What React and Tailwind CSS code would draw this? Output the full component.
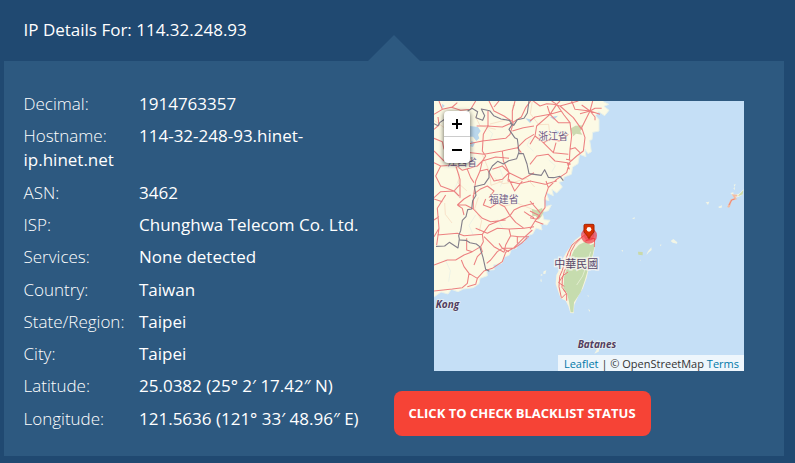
import React from "react";

const details = [
  ["Decimal:", ["1914763357"]],
  ["Hostname:", ["114-32-248-93.hinet-", "ip.hinet.net"]],
  ["ASN:", ["3462"]],
  ["ISP:", ["Chunghwa Telecom Co. Ltd."]],
  ["Services:", ["None detected"]],
  ["Country:", ["Taiwan"]],
  ["State/Region:", ["Taipei"]],
  ["City:", ["Taipei"]],
  ["Latitude:", ["25.0382 (25° 2′ 17.42″ N)"]],
  ["Longitude:", ["121.5636 (121° 33′ 48.96″ E)"]],
];

const mainland =
  "M0 0H528L520 20L536 28L522 34L537 46L524 62L506 50L497 62L507 74V108L488 112L486 134L479 136L484 170L474 176L464 162L468 185L449 178L444 206L428 216L424 238L402 246L400 258L387 262L397 276L380 294L366 283L370 302L348 292L357 317L342 313L346 335L364 330L355 347L336 352L342 374L360 376L351 390L332 386L336 405L318 399L308 417L286 424L283 440L263 444L260 460L244 463L238 480L223 486L216 504L190 510L193 524L170 526L172 542L150 550L147 566L130 578L100 582L84 590L64 583L54 597L33 591L12 606L0 600Z";

const northwestRoads =
  "M162 30V75L148 100L145 150L155 165L145 180L138 210L125 240L118 290M105 128L145 120L215 112L228 100L238 65M128 75L160 75L205 78L235 65L262 48L275 20L290 0M85 152L150 160L205 150L250 140L262 155M70 5L55 18L25 25L0 40M15 0L25 25M50 18L80 28L110 25L125 0M165 0L180 30L210 45L235 62L235 30L243 0M180 18L195 0M205 150L208 180L225 215L265 235L300 215M0 185L20 195L65 192L85 208L130 195L145 180L185 168L225 172M65 192L78 235V290M0 150L30 180M20 195L5 225L20 255L60 270L78 250M0 85L15 72L12 48M0 112L25 122L30 145M118 280L138 265L160 255L180 270L165 290M138 210L160 205L180 240L205 235L225 215L205 195L175 205M225 215L222 240L255 248L290 240M100 205L110 230L120 245M0 290L20 272L60 270L75 285M235 90L268 80L300 75M250 140L275 115L300 100M225 235L242 270L265 240";

const southwestRoads =
  "M35 0L10 40L15 100L8 150M0 12L25 20M10 120L70 115L90 122L145 118L165 90L215 70L228 62L212 35L190 24L170 38L148 30L155 12M0 75L15 65M70 30L90 12L110 0M70 30L85 40L90 60M118 0V42L145 70L170 80L215 75M118 42L95 30L70 30M228 62L240 45L260 35L300 25M125 100L160 115L190 100L225 102L270 100L300 95M145 118L148 140L140 155L145 170L130 185L120 210M150 125L180 155L210 172M205 160L190 170L170 195L158 205M210 172L215 150L230 122L255 125L285 125M205 160L240 160L262 145L280 128M0 210L40 195L65 195L90 180L115 170L140 155M82 195L90 215L105 235L130 250L150 228L175 220L205 200L215 172L240 158L270 128L295 105M105 235L100 265L85 278L55 282L0 288M130 250L125 268L100 275M98 130V165L115 170M225 102L230 122L220 140M195 145L205 160L225 170M270 50L285 60L300 68M228 62L245 82L270 100M250 125L250 145M15 100L0 125";

const northeastRoads =
  "M80 10L60 40L20 75L15 105L40 125L70 155L115 160M80 10L102 42L120 65L125 105L120 145L118 180M10 0L30 15L50 8L70 10L90 15L145 0M65 0L80 10L90 0M125 0L135 25L180 30L195 22L215 22M180 30L210 40M155 12L180 30L188 0M150 38L180 30L195 48V58M180 30L165 60L155 80L165 110L160 150L140 165L118 185M90 15L130 50L155 85M0 190L20 165L55 160L75 180L112 185L118 205M0 60L15 48L60 40L85 65L120 65M60 40L52 15M60 40L95 30M15 105L0 130M40 125L60 115L88 120L115 100M70 155L78 125M118 185L110 215L80 235L55 260L45 290V320L30 340L15 360L0 385M0 240L45 250L80 240M0 300L30 335M0 330L30 345L20 355L0 350M15 360L40 370M120 145L135 140L150 155M55 260L48 240M108 175L128 178M112 185L122 190";

const coralRoads = [
  "M12 76L50 103M180 87L224 76M135 62L150 92L197 103M307 18L301 56L326 89L356 88L359 115L325 126M194 250L219 266L258 260L290 250L314 276",
  "M158 181L179 231L183 271L219 258M74 211L88 239L84 264L110 287M44 324L46 358L66 384M145 307L134 341L155 377L148 409M222 333L263 325L305 342",
];

const borders = [
  "M12 86L24 92L30 82L45 72M106 53L126 40L143 50L138 68L158 76L164 62L154 42L179 47L191 62L213 72L238 76L247 88L237 103L254 128L262 132L267 171L260 191L236 197L220 207L203 199L187 213L177 231V248L163 268L133 275L138 301L128 317L125 342L113 344L108 365L97 376L92 407L86 422L88 432L84 459L58 442L44 453L18 454",
  "M240 85L251 91L262 74L282 70L292 54L297 18M267 176L280 176L291 207L297 236L318 239L334 241L344 224L355 247L371 248L390 244L400 257",
  "M88 435L108 436L120 443L139 447L149 455L159 487L167 523L178 529",
];

function Label({ x, y, size = 29.5, children, latin = false }) {
  return (
    <text
      x={x}
      y={y}
      fontSize={size}
      fill={latin ? "#513d61" : "#705c86"}
      stroke="#faf8ed"
      strokeWidth="4"
      strokeOpacity=".65"
      paintOrder="stroke"
      className={latin ? "font-['Open_Sans',sans-serif] font-bold italic" : "font-['Noto_Sans_CJK_SC',sans-serif]"}
    >
      {children}
    </text>
  );
}

function MapArtwork() {
  return (
    <svg className="block h-[270px] w-[310px]" viewBox="12 18 930 810" aria-label="Map of Taiwan">
      <rect x="12" y="18" width="930" height="810" fill="#c5dff6" />
      <path d={mainland} fill="#fcfae5" stroke="#eaf2e8" strokeWidth="3" />
      <g fill="#bad7ec">
        <path d="M119 93L144 96L152 108L144 119L148 130L139 138L129 125H118Z" />
        <path d="M124 137L135 143L129 156L121 154ZM286 70L308 74L300 84ZM374 104L389 111L380 120ZM36 26L44 32L37 40ZM360 66L384 62L372 74Z" />
      </g>
      <g fill="#cddab0">
        <path d="M421 101L436 92L458 91L451 110L457 119L438 116L430 124Z" />
        <path d="M305 341L320 346L336 339L341 352L334 365L326 374L317 363L307 363ZM248 31L256 28L248 41Z" />
      </g>
      <g fill="none" stroke="#d5e5e8" strokeWidth="1.5" opacity=".75">
        <path d="M58 108L70 150L54 188M88 250L74 282L91 312M168 97L188 116L178 139M209 219L221 251L211 275M304 124L291 151L311 169M356 195L376 212L366 230M137 360L117 391L130 421M203 373L219 401M45 492L61 527L56 560" />
      </g>
      <g fill="none" stroke="#f6cdb2" strokeWidth="2.2" opacity=".75">
        {coralRoads.map((d) => <path d={d} key={d} />)}
      </g>
      <g fill="none" stroke="#ec8181" strokeWidth="3.2" strokeLinejoin="round">
        <path d={northwestRoads} transform="translate(12 18)" />
        <path d={southwestRoads} transform="translate(12 300)" />
        <path d={northeastRoads} transform="translate(300 18)" />
      </g>
      <g fill="none" stroke="#817d89" strokeWidth="3.3" strokeLinejoin="round">
        {borders.map((d) => <path d={d} key={d} />)}
      </g>

      <path d="M471 409L454 421L435 435L423 452L410 470L397 493L389 522L379 540L377 567L384 588L392 610L407 617L415 633L421 654L431 655L433 629L445 603L459 580L470 549L476 522L487 494L494 460L496 430L487 417Z" fill="#f8f4de" />
      <path d="M466 440L447 449L432 466L421 491L410 522L402 546L402 560L400 580L411 594L417 620L422 652H430L432 622L452 592L465 554L474 523L488 480L496 444L482 450Z" fill="#c6dcae" />
      <g fill="none" stroke="#ec7777" strokeWidth="3">
        <path d="M463 421L444 435L426 450L415 472L405 499L397 526L389 544L387 575L394 608M454 429L435 448L423 470L415 503L403 529L397 552L396 577L407 592M409 505L397 509M414 531L399 542L386 563L403 574M400 583L410 597V617M394 610L409 595M466 438L481 432L494 430L493 456" />
      </g>
      <path d="M482 470L471 506L458 543L440 570" fill="none" stroke="#e2edcf" strokeWidth="3" />

      <g fill="#f2f5e6">
        <path d="M341 529L349 526L346 537L339 536ZM333 537L339 540L332 543ZM333 550L336 560L331 559ZM472 600L476 602L475 607ZM474 643L480 645L479 651ZM500 738L506 735L504 744ZM499 751L509 755L506 770L493 776L500 764Z" />
        <path d="M827 322L838 320L834 330ZM865 335L876 331L875 338L867 339ZM911 269L917 267L914 276ZM910 280L915 276L914 286ZM901 294L910 292L911 300L927 296L941 283L937 299L925 306L914 308ZM606 370L615 367L613 373ZM574 466L579 465L578 471ZM650 477L654 469L664 457L665 465L655 473L650 479ZM722 438L730 432L742 442L741 446L728 443ZM689 450L694 448L693 454ZM629 495L632 494L631 499Z" />
      </g>
      <path d="M624 470L638 471L638 481L625 479ZM924 302L940 286L938 298L928 302" fill="#c9d9a8" />
      <path d="M894 337L904 315L917 311L910 301L922 302M904 315L897 336" fill="none" stroke="#f3bda2" strokeWidth="5" />
      <path d="M897 330L905 315L914 312" fill="none" stroke="#eb7a70" strokeWidth="2.5" />

      <Label x="52" y="214">江西省</Label>
      <Label x="325" y="136">浙江省</Label>
      <Label x="177" y="325">福建省</Label>
      <text x="373" y="520" fontSize="33" fill="#594668" stroke="#f8f6f1" strokeWidth="9" strokeOpacity=".8" paintOrder="stroke" className="font-['Noto_Sans_CJK_TC',sans-serif]">中華民國</text>
      <Label x="17" y="639" size={30} latin>Kong</Label>
      <Label x="443" y="758" size={30} latin>Batanes</Label>
      <circle cx="477" cy="422" r="24" fill="#f01626" opacity=".58" />
      <circle cx="477" cy="422" r="15" fill="#f01626" opacity=".35" />
      <path d="M466 388H489Q492 388 492 391V411L481 424Q477 438 473 424L462 411V391Q462 388 466 388Z" fill="#d83100" stroke="#a52400" strokeWidth="3" />
      <circle cx="477" cy="403" r="7" fill="#fff9f3" />
    </svg>
  );
}

function LocationMap() {
  return (
    <div className="relative ml-10 h-[270px] w-[310px] overflow-hidden">
      <MapArtwork />
      <div className="absolute left-[10px] top-[10px] flex h-[52px] w-[26px] flex-col overflow-hidden rounded bg-white text-black shadow-[0_1px_5px_rgba(0,0,0,0.65)]">
        <button aria-label="Zoom in" className="flex h-[26px] items-center justify-center border-b border-[#ccc]">
          <svg width="12" height="12" viewBox="0 0 12 12" stroke="currentColor" strokeWidth="2"><path d="M1 1" /><path d="M6 1V11M1 6H11" /></svg>
        </button>
        <button aria-label="Zoom out" className="flex h-[26px] items-center justify-center">
          <svg width="12" height="12" viewBox="0 0 12 12" stroke="currentColor" strokeWidth="2"><path d="M1 6H11" /></svg>
        </button>
      </div>
      <div className="absolute bottom-0 right-0 h-4 whitespace-nowrap bg-white/70 pl-[5.5px] pr-[5px] text-[11px] leading-[17px] text-[#333]">
        <a className="text-[#0078a8]">Leaflet</a> | © OpenStreetMap <a className="text-[#0078a8]">Terms</a>
      </div>
    </div>
  );
}

export default function App() {
  return (
    <main className="h-[463px] w-[795px] overflow-hidden bg-[#204971] pl-1 font-['Open_Sans',sans-serif] text-white">
      <header className="relative flex h-[61px] items-center pb-0.5 pl-[19.5px]">
        <h1 className="text-[17px] leading-6">IP Details For: 114.32.248.93</h1>
        <svg className="absolute bottom-0 left-[364px] h-[26px] w-[52px]" viewBox="0 0 52 26"><path d="M0 26L26 0L52 26Z" fill="#2d5980" /></svg>
      </header>
      <section className="flex h-[395px] w-[780px] bg-[#2d5980]">
        <div className="w-[370px] pl-[19.5px] pt-[30.87px] text-[17px] leading-[24.28px]">
          {details.map(([label, lines]) => (
            <p className="mb-2 w-[345px]" key={label}>
              <span className="inline-block w-[115.5px] font-light">{label}</span>
              {lines.map((line, index) => (
                <React.Fragment key={line}>
                  {index > 0 && <br />}
                  <span>{line}</span>
                </React.Fragment>
              ))}
            </p>
          ))}
        </div>
        <div className="ml-5 pt-10">
          <LocationMap />
          <button className="mt-5 flex h-[45px] w-[257px] items-center justify-center rounded-lg bg-[#f64336] pr-px pt-px text-[13px] font-bold">
            CLICK TO CHECK BLACKLIST STATUS
          </button>
        </div>
      </section>
    </main>
  );
}
